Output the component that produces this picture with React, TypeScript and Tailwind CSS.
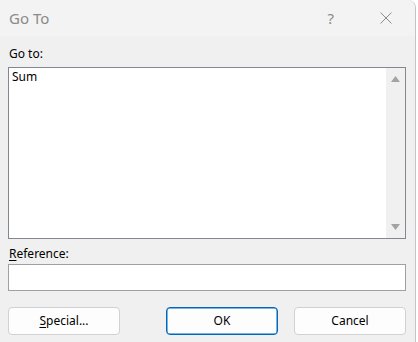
import React from 'react'

const font = { fontFamily: '"Segoe UI", "Noto Sans", sans-serif' }

const DialogButton: React.FC<{ children: React.ReactNode; primary?: boolean; className?: string }> = ({
  children,
  primary,
  className = ''
}) => (
  <button
    type="button"
    className={`h-[28px] w-[112px] rounded-[4px] bg-[#fdfdfd] text-[12px] leading-[16px] text-black ${
      primary ? 'border border-[#0067c0] shadow-[inset_0_0_0_0.5px_#0067c0]' : 'border border-[#d1d1d1]'
    } ${className}`}
  >
    {children}
  </button>
)

export default function App() {
  return (
    <div className="w-[418px] h-[342px] bg-white overflow-hidden" style={font}>
      <div className="w-[416px] h-[360px] bg-[#f0f0f0] border-r border-[#c4c4c4] rounded-tr-[8px] flex flex-col">
        {/* title bar */}
        <div className="h-[36px] bg-[#f3f3f3] rounded-tr-[8px] flex items-center pl-[9px]">
          <span className="text-[15px] leading-[20px] text-[#8a8a8a] mb-[1px]">Go To</span>
          <span className="ml-auto mr-[46px] text-[15px] leading-[20px] text-[#8a8a8a] mb-[1px]">?</span>
          <svg width="12" height="12" viewBox="0 0 12 12" className="mr-[23px]">
            <path d="M0.5 0.5 L11.5 11.5 M11.5 0.5 L0.5 11.5" stroke="#8a8a8a" strokeWidth="1" />
          </svg>
        </div>

        {/* body */}
        <div className="px-[8px] pt-[10px]">
          <div className="text-[12px] leading-[16px] text-black pl-[1px]">Go to:</div>

          <div className="mt-[5px] w-[398px] h-[172px] border border-[#828790] bg-white flex">
            <div className="flex-1 pl-[3px] pt-[1px] text-[12px] leading-[16px] text-black">Sum</div>
            <div className="w-[19px] bg-[#f0f0f0] flex flex-col items-center justify-between pt-[8px] pb-[8px]">
              <svg width="9" height="6" viewBox="0 0 9 6">
                <path d="M4.5 0 L9 6 L0 6 Z" fill="#a3a3a3" />
              </svg>
              <svg width="9" height="6" viewBox="0 0 9 6">
                <path d="M0 0 L9 0 L4.5 6 Z" fill="#a3a3a3" />
              </svg>
            </div>
          </div>

          <div className="mt-[7px] text-[12px] leading-[16px] text-black pl-[1px]">
            <span className="underline underline-offset-[2px]">R</span>eference:
          </div>
          <div className="mt-[2px] w-[398px] h-[27px] border border-[#a0a0a0] bg-white" />

          <div className="mt-[16px] flex w-[398px]">
            <DialogButton>
              <span className="underline underline-offset-[2px]">S</span>pecial...
            </DialogButton>
            <DialogButton primary className="ml-auto">
              OK
            </DialogButton>
            <DialogButton className="ml-[16px] w-[111px]">Cancel</DialogButton>
          </div>
        </div>
      </div>
    </div>
  )
}
